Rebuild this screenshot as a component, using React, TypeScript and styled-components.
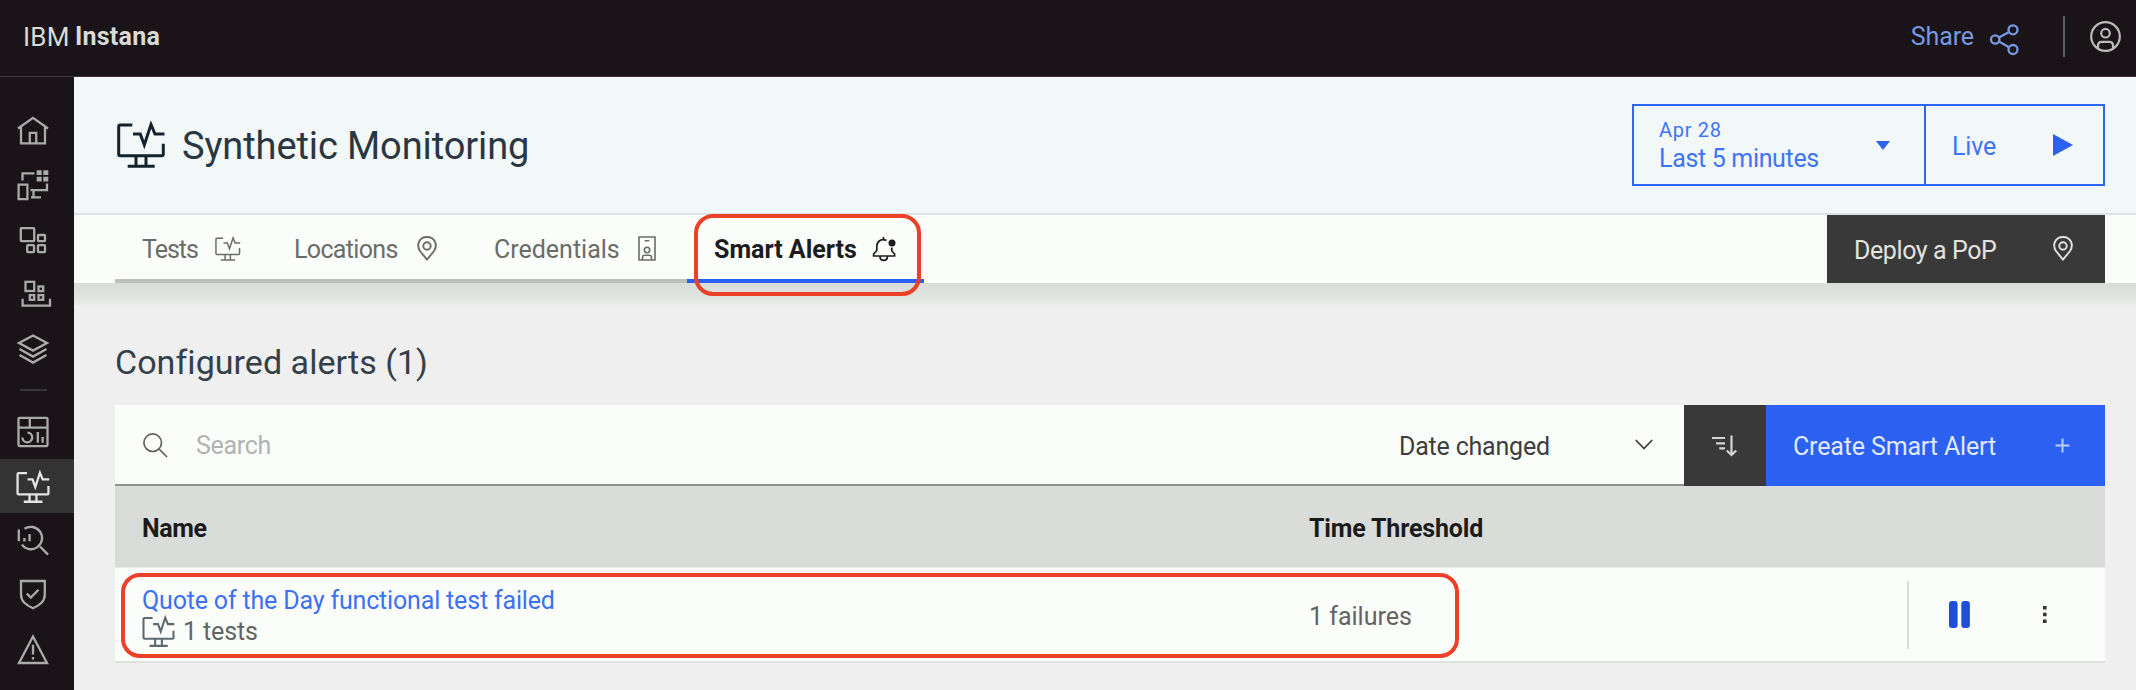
import React from 'react';
import styled, { createGlobalStyle, css } from 'styled-components';

const GlobalStyle = createGlobalStyle`
  * { box-sizing: border-box; }
  body { margin: 0; background: #efefef; font-family: Roboto, "Liberation Sans", sans-serif; overflow: hidden; }
  svg { display: block; flex: none; overflow: visible; }
`;

/* ---------- shell ---------- */
const Page = styled.div`
  position: relative;
  display: flex;
  flex-direction: column;
  width: 2136px;
  height: 690px;
  overflow: hidden;
`;
const TopBar = styled.header`
  display: flex;
  align-items: center;
  height: 77px;
  flex: none;
  padding: 0 15px 3px 23px;
  background: #1a1418;
  border-bottom: 1px solid #3c3a3c;
`;
const Brand = styled.div`
  display: flex;
  flex: 1;
  gap: 5px;
  color: #d9dad7;
`;
const ShareLink = styled.div`
  display: flex;
  align-items: center;
  gap: 16px;
  color: #7598e0;
`;
const BarDivider = styled.div`
  width: 2px;
  height: 41px;
  margin: 0 25px 0 44px;
  background: #56606c;
`;
const Account = styled.div`
  color: #b9bbb8;
`;
const Body = styled.div`
  display: flex;
  flex: 1;
  min-height: 0;
`;
const SideNav = styled.nav`
  display: flex;
  flex-direction: column;
  width: 74px;
  flex: none;
  padding-top: 26.8px;
  background: #1a1418;
`;
const NavItem = styled.div<{ $active?: boolean }>`
  display: flex;
  align-items: center;
  justify-content: center;
  height: 54.4px;
  flex: none;
  padding-right: 8px;
  padding-top: ${p => (p.$active ? 2 : 0)}px;
  color: ${p => (p.$active ? '#e4e5e2' : '#a9aba8')};
  background: ${p => (p.$active ? '#333333' : 'transparent')};
`;
const NavDivider = styled.div`
  width: 27px;
  height: 2px;
  flex: none;
  margin: 13.3px 0 13.3px 20px;
  background: #35383b;
`;
const Main = styled.main`
  display: flex;
  flex-direction: column;
  flex: 1;
  min-width: 0;
`;

const Label = styled.span<{ $size?: number; $track?: number; $weight?: number }>`
  font-size: ${p => p.$size ?? 25}px;
  font-weight: ${p => p.$weight ?? 400};
  letter-spacing: ${p => p.$track ?? 0}px;
  line-height: 30px;
  white-space: pre;
`;

/* ---------- page header ---------- */
const PageHeader = styled.div`
  display: flex;
  align-items: flex-start;
  height: 138px;
  flex: none;
  padding: 27px 31px 0 41px;
  background: #f2f7f8;
  border-bottom: 2px solid #dbe2e4;
`;
const Title = styled.h1`
  display: flex;
  flex: 1;
  align-items: center;
  gap: 15px;
  height: 82px;
  margin: 0;
  padding-top: 2px;
  font-weight: 400;
  color: #2a3742;
  svg { margin-top: -3px; color: #12232d; }
`;
const TimePicker = styled.div`
  display: flex;
  width: 473px;
  height: 82px;
  border: 2px solid #2f65f3;
  color: #3f74f5;
`;
const RangePart = styled.div`
  display: flex;
  flex: 1;
  align-items: center;
  justify-content: space-between;
  padding: 0 34px 0 25px;
  border-right: 2px solid #2f65f3;
`;
const RangeText = styled.div`
  display: flex;
  flex-direction: column;
  ${Label} { line-height: 29px; }
  ${Label}:first-child { line-height: 27px; }
`;
const LivePart = styled.div`
  display: flex;
  width: 177px;
  align-items: center;
  justify-content: space-between;
  padding: 3px 30px 0 26px;
  svg { margin-top: -4px; }
`;

/* ---------- tabs ---------- */
const TabBar = styled.div`
  display: flex;
  height: 68px;
  flex: none;
  padding: 0 31px 0 41px;
  background: #fbfdfa;
`;
const Tab = styled.div<{ $active?: boolean; $width: number; $gap: number }>`
  display: flex;
  align-items: center;
  width: ${p => p.$width}px;
  gap: ${p => p.$gap}px;
  padding-left: 27px;
  border-bottom: 4px solid ${p => (p.$active ? '#2a60f0' : '#bcc0bd')};
  color: ${p => (p.$active ? '#1c1c1e' : '#6a6c6a')};
  padding-top: 6px;
  svg { margin-top: -3px; }
`;
const Spacer = styled.div`
  flex: 1;
`;
const DeployButton = styled.div`
  display: flex;
  width: 278px;
  align-items: center;
  justify-content: space-between;
  padding: 3px 32px 0 27px;
  background: #393939;
  color: #e2e3e0;
  svg { margin-top: -4px; }
`;
const Content = styled.section`
  display: flex;
  flex-direction: column;
  flex: 1;
  padding: 71px 31px 0 41px;
  background: linear-gradient(#d9dcd9, #dfe3df 12px, #e9ece8 22px, #efefef 23px) no-repeat #efefef;
`;
const SectionTitle = styled.h2`
  margin: 0 0 35px;
  height: 16px;
  display: flex;
  align-items: center;
  font-weight: 400;
  color: #33404a;
`;

/* ---------- table ---------- */
const Toolbar = styled.div`
  display: flex;
  height: 81px;
  flex: none;
`;
const SearchField = styled.div`
  display: flex;
  flex: 1;
  align-items: center;
  padding: 2px 0 0 28px;
  gap: 28px;
  background: #fbfdfa;
  border-bottom: 2px solid #8f918f;
  color: #b1b3b0;
  svg { margin-top: -1px; color: #5c5e5c; }
`;
const SortSelect = styled.div`
  display: flex;
  width: 312px;
  align-items: center;
  justify-content: space-between;
  padding: 5px 31px 0 27px;
  background: #fbfdfa;
  border-bottom: 2px solid #8f918f;
  color: #3c3d3c;
  svg { margin-top: -5px; }
`;
const SortOrder = styled.div`
  display: flex;
  width: 82px;
  align-items: center;
  justify-content: center;
  background: #393939;
  color: #d4d5d2;
`;
const CreateButton = styled.div`
  display: flex;
  width: 339px;
  align-items: center;
  justify-content: space-between;
  padding: 3px 35px 0 27px;
  background: #2c60f0;
  color: #e0e8fb;
  svg { margin-top: -3px; color: #b9cdfa; }
`;
const rowGrid = css`
  display: grid;
  grid-template-columns: 1167px 1fr 198px;
  align-items: center;
  padding-left: 27px;
`;
const HeadRow = styled.div`
  ${rowGrid}
  height: 82px;
  flex: none;
  padding-top: 5px;
  background: #dadcd9;
  border-bottom: 1px solid #e8e9e7;
  color: #1b1b1c;
`;
const DataRow = styled.div`
  ${rowGrid}
  height: 95px;
  flex: none;
  background: #fbfdfa;
  border-bottom: 2px solid #dfe1df;
  color: #626462;
`;
const NameCell = styled.div`
  display: flex;
  flex-direction: column;
  padding-top: 3px;
`;
const AlertLink = styled.a`
  display: flex;
  height: 31px;
  align-items: center;
  color: #3d70f4;
`;
const TestCount = styled.div`
  display: flex;
  height: 31px;
  align-items: center;
  gap: 7px;
  svg { margin: -1px 0 0 -1px; color: #5d6a72; }
`;
const Threshold = styled.div`
  padding-top: 5px;
`;
const Actions = styled.div`
  display: flex;
  align-items: center;
  height: 68px;
  border-left: 2px solid #d9dbdc;
  padding-left: 40px;
  gap: 72px;
`;

const Callout = styled.div<{ $x: number; $y: number; $w: number; $h: number }>`
  position: absolute;
  left: ${p => p.$x}px;
  top: ${p => p.$y}px;
  width: ${p => p.$w}px;
  height: ${p => p.$h}px;
  border: 4px solid #ec4128;
  border-radius: 19px;
`;

/* ---------- icons ---------- */
type IconProps = { w: number; h: number; stroke?: number; children: React.ReactNode; vb?: string };
const Icon = ({ w, h, stroke = 2.2, children, vb }: IconProps) => (
  <svg width={w} height={h} viewBox={vb ?? `0 0 ${w} ${h}`} fill="none" stroke="currentColor" strokeWidth={stroke}>
    {children}
  </svg>
);
const NavIcon = ({ children }: { children: React.ReactNode }) => (
  <Icon w={36} h={36} stroke={2.3}>{children}</Icon>
);

const MonitorIcon = ({ size, stroke = 3 }: { size: number; stroke?: number }) => (
  <Icon w={size} h={size} stroke={stroke} vb="0 0 52 52">
    <path d="M17.3 6H5.2Q3.7 6 3.7 7.5V35.2Q3.7 36.7 5.2 36.7H46.8Q48.3 36.7 48.3 35.2V24.7" />
    <path d="M18 15H25.3L29.3 26L36 5.5L40 15H49.5M21 36.7V47.3M31 36.7V47.3M12.7 47.3H39.7" />
  </Icon>
);
const PinIcon = () => (
  <Icon w={20} h={25} stroke={1.9}>
    <path d="M10 23.6L3 15C-.8 9.6 1.6 1 10 1C18.4 1 20.8 9.6 17 15Z" />
    <circle cx="10" cy="10" r="3.7" />
  </Icon>
);
const BadgeIcon = () => (
  <Icon w={18} h={25} stroke={1.6}>
    <path d="M1 1H17V24H1ZM6.7 4.8H11.3" />
    <circle cx="9" cy="14" r="2.7" />
    <path d="M4.5 24V21.5Q4.5 19.3 6.7 19.3H11.3Q13.5 19.3 13.5 21.5V24" />
  </Icon>
);
const BellIcon = () => (
  <Icon w={24} h={26} stroke={1.7}>
    <path d="M14.5 4.4C9 2.2 5 5.5 4.8 10V14.5L1.6 18V20H22.6V18L19.8 15V11.5M11.5 1V3.5M8 20.5C8 25.6 15.4 25.6 15.4 20.5" />
    <circle cx="20" cy="7" r="3.5" fill="currentColor" stroke="none" />
  </Icon>
);
const ShareIcon = () => (
  <Icon w={29} h={36} stroke={2.3}>
    <circle cx="5.2" cy="20.5" r="4.2" />
    <circle cx="23" cy="10.8" r="4.5" />
    <circle cx="23" cy="30.5" r="4.5" />
    <path d="M9 18.5L19 13M9 22.5L19 28.3" />
  </Icon>
);
const UserIcon = () => (
  <Icon w={31} h={31} stroke={2.2}>
    <circle cx="15.5" cy="15.5" r="14.3" />
    <circle cx="15.5" cy="12.2" r="4.3" />
    <path d="M8 27V24.5Q8 20.8 11.7 20.8H19.3Q23 20.8 23 24.5V27" />
  </Icon>
);

export default function App() {
  return (
    <>
      <GlobalStyle />
      <Page>
        <TopBar>
          <Brand>
            <Label $size={26} $track={0.3}>IBM</Label>
            <Label $weight={700} $track={0.25}>Instana</Label>
          </Brand>
          <ShareLink>
            <Label $track={-0.1}>Share</Label>
            <ShareIcon />
          </ShareLink>
          <BarDivider />
          <Account><UserIcon /></Account>
        </TopBar>
        <Body>
          <SideNav>
            <NavItem>
              <NavIcon><path d="M3 15.5L18 4.8L33 15.5M6 13.5V30.3H30V13.5M14.8 30V19.8H21.2V30" /></NavIcon>
            </NavItem>
            <NavItem>
              <NavIcon>
                <path d="M7.5 13.5V6.3H19.5M3.6 17.7H12.4V32.2H3.6ZM32 16.5V23.2H15.5M18.5 23V30M16 30.3H26" />
                <path d="M21.7 3.3h5v4.7h-5zM28.3 3.3h5v4.7h-5zM21.7 9.8h5v4.7h-5zM28.3 9.8h5v4.7h-5z" fill="currentColor" stroke="none" />
              </NavIcon>
            </NavItem>
            <NavItem>
              <NavIcon>
                <rect x="5.8" y="6.2" width="13.4" height="13" rx=".6" />
                <rect x="23" y="13" width="7" height="6.2" rx=".6" />
                <rect x="12.2" y="23.2" width="6.8" height="7" rx=".6" />
                <rect x="23" y="23.2" width="7" height="7" rx=".6" />
              </NavIcon>
            </NavItem>
            <NavItem>
              <NavIcon>
                <rect x="10.5" y="5.8" width="8.7" height="9.2" />
                <rect x="23.5" y="10.5" width="4.7" height="4.6" />
                <rect x="14.8" y="19.1" width="4.4" height="4.7" />
                <rect x="23.5" y="19.1" width="4.7" height="4.7" />
                <path d="M7.6 22.8V29.7H35V22.8" />
              </NavIcon>
            </NavItem>
            <NavItem>
              <NavIcon>
                <path d="M18 4.6L32 12L18 19.6L4 12ZM4.5 18L18 25.6L31.5 18M4.5 24L18 31.6L31.5 24" />
              </NavIcon>
            </NavItem>
            <NavDivider />
            <NavItem>
              <NavIcon>
                <rect x="3.5" y="3.8" width="29" height="28.3" rx="1" />
                <path d="M3.5 13.7H32.5M14.8 4V13.7M12.5 18.6A4.9 4.9 0 1 1 7.4 23.6M22.8 18V28.7M27.6 23V28.7" />
              </NavIcon>
            </NavItem>
            <NavItem $active><MonitorIcon size={36} stroke={3.3} /></NavItem>
            <NavItem>
              <NavIcon>
                <path d="M9.5 6.8A11.2 11.2 0 1 1 6.8 22.6M25 24.5L33 32.6M3.8 7.6V19.3M9.4 16V19.5M14.6 12V19.3" />
              </NavIcon>
            </NavItem>
            <NavItem>
              <NavIcon><path d="M6 4H29.8V17.5C29.8 24.5 25 28 18 31.3C11 28 6 24.5 6 17.5ZM11.8 16.5L15.8 20.5L23.5 12.8" /></NavIcon>
            </NavItem>
            <NavItem>
              <NavIcon><path d="M18 5.5L32 32H4ZM18 13.8V23.5M18 26V28.6" /></NavIcon>
            </NavItem>
          </SideNav>
          <Main>
            <PageHeader>
              <Title>
                <MonitorIcon size={52} />
                <Label $size={38} $track={-0.1}>Synthetic Monitoring</Label>
              </Title>
              <TimePicker>
                <RangePart>
                  <RangeText>
                    <Label $size={20} $track={0.7}>Apr 28</Label>
                    <Label $track={-0.33}>Last 5 minutes</Label>
                  </RangeText>
                  <Icon w={14} h={9}><path d="M0 0H14L7 9Z" fill="#2c60f0" stroke="none" /></Icon>
                </RangePart>
                <LivePart>
                  <Label $track={-0.2}>Live</Label>
                  <Icon w={20} h={22}><path d="M0 0L20 11L0 22Z" fill="#2c60f0" stroke="none" /></Icon>
                </LivePart>
              </TimePicker>
            </PageHeader>
            <TabBar>
              <Tab $width={152} $gap={16}>
                <Label $track={-1}>Tests</Label>
                <MonitorIcon size={27.5} stroke={2.8} />
              </Tab>
              <Tab $width={200} $gap={19}>
                <Label $track={-0.66}>Locations</Label>
                <PinIcon />
              </Tab>
              <Tab $width={220} $gap={18}>
                <Label>Credentials</Label>
                <BadgeIcon />
              </Tab>
              <Tab $width={237} $gap={15} $active>
                <Label $weight={700}>Smart Alerts</Label>
                <BellIcon />
              </Tab>
              <Spacer />
              <DeployButton>
                <Label $track={-0.41}>Deploy a PoP</Label>
                <PinIcon />
              </DeployButton>
            </TabBar>
            <Content>
              <SectionTitle><Label $size={34} $track={0.05}>Configured alerts (1)</Label></SectionTitle>
              <Toolbar>
                <SearchField>
                  <Icon w={25} h={25} stroke={1.7}><circle cx="9.7" cy="9.7" r="8.8" /><path d="M16 16L24 24" /></Icon>
                  <Label $track={-0.3}>Search</Label>
                </SearchField>
                <SortSelect>
                  <Label $track={-0.2}>Date changed</Label>
                  <Icon w={18} h={11} stroke={1.8}><path d="M.8 1L9 9.5L17.2 1" /></Icon>
                </SortSelect>
                <SortOrder>
                  <Icon w={26} h={22} stroke={2.2}>
                    <path d="M0 3H13M4 8.3H13M7.3 13.3H13M19.5 .5V19.5M14.8 15.5L19.5 20L24.2 15.5" />
                  </Icon>
                </SortOrder>
                <CreateButton>
                  <Label $track={-0.15}>Create Smart Alert</Label>
                  <Icon w={15} h={15} stroke={2}><path d="M7.5 .5V14.5M.5 7.5H14.5" /></Icon>
                </CreateButton>
              </Toolbar>
              <HeadRow>
                <Label $weight={700} $track={-0.4}>Name</Label>
                <Label $weight={700} $track={-0.16}>Time Threshold</Label>
              </HeadRow>
              <DataRow>
                <NameCell>
                  <AlertLink><Label $track={-0.17}>Quote of the Day functional test failed</Label></AlertLink>
                  <TestCount>
                    <MonitorIcon size={35} stroke={3.1} />
                    <Label $track={-0.14}>1 tests</Label>
                  </TestCount>
                </NameCell>
                <Threshold><Label>1 failures</Label></Threshold>
                <Actions>
                  <Icon w={22} h={27}>
                    <g fill="#1f4fd8" stroke="none">
                      <rect x="0" y="0" width="8.6" height="27" rx="3" />
                      <rect x="12.3" y="0" width="8.6" height="27" rx="3" />
                    </g>
                  </Icon>
                  <Icon w={4} h={17}>
                    <path d="M0 0h3.6v3.6h-3.6zM0 6.7h3.6v3.6h-3.6zM0 13.4h3.6v3.6h-3.6z" fill="#333" stroke="none" />
                  </Icon>
                </Actions>
              </DataRow>
            </Content>
          </Main>
        </Body>
        <Callout $x={694} $y={214} $w={227} $h={82} />
        <Callout $x={121} $y={573} $w={1338} $h={85} />
      </Page>
    </>
  );
}
